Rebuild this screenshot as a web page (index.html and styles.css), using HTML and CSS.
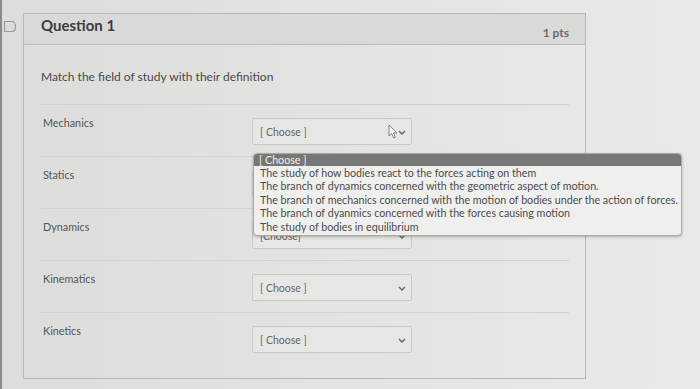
FILE: index.html
```html
<!DOCTYPE html>
<html>
<head>
<meta charset="utf-8">
<link rel="stylesheet" href="styles.css">
</head>
<body>
<div class="page">
  <div class="flag">
    <svg width="14" height="13" viewBox="0 0 14 13"><path d="M1.5 1.5 H9 Q12.5 1.5 12.5 6.5 Q12.5 11.5 9 11.5 H1.5 Z" fill="none" stroke="#9a9a98" stroke-width="1.2"/></svg>
  </div>
  <div class="card">
    <div class="card-head">
      <div class="title">Question 1</div>
      <div class="pts">1 pts</div>
    </div>
    <div class="card-body">
      <p class="prompt">Match the field of study with their definition</p>
      <div class="rows">
        <div class="row">
          <div class="label">Mechanics</div>
          <div class="select-wrap">
            <div class="select">
              <span>[ Choose ]</span>
              <svg class="chev" width="8" height="5" viewBox="0 0 8 5"><path d="M1 1 L4 4 L7 1" fill="none" stroke="#666" stroke-width="1.4"/></svg>
            </div>
            <svg class="cursor" width="11" height="15" viewBox="0 0 11 15"><path d="M1 1 L1 12 L3.6 9.6 L5.6 14 L7.4 13.2 L5.4 8.9 L9 8.9 Z" fill="#f2f2f0" stroke="#777" stroke-width="0.9" stroke-linejoin="round"/></svg>
            <div class="dropdown">
              <div class="opt active">[ Choose ]</div>
              <div class="opt">The study of how bodies react to the forces acting on them</div>
              <div class="opt">The branch of dynamics concerned with the geometric aspect of motion.</div>
              <div class="opt">The branch of mechanics concerned with the motion of bodies under the action of forces.</div>
              <div class="opt">The branch of dyanmics concerned with the forces causing motion</div>
              <div class="opt">The study of bodies in equilibrium</div>
            </div>
          </div>
        </div>
        <div class="row">
          <div class="label">Statics</div>
          <div class="select-wrap">
            <div class="select">
              <span>[ Choose ]</span>
              <svg class="chev" width="8" height="5" viewBox="0 0 8 5"><path d="M1 1 L4 4 L7 1" fill="none" stroke="#666" stroke-width="1.4"/></svg>
            </div>
          </div>
        </div>
        <div class="row">
          <div class="label">Dynamics</div>
          <div class="select-wrap">
            <div class="select">
              <span>[Choose]</span>
              <svg class="chev" width="8" height="5" viewBox="0 0 8 5"><path d="M1 1 L4 4 L7 1" fill="none" stroke="#666" stroke-width="1.4"/></svg>
            </div>
          </div>
        </div>
        <div class="row">
          <div class="label">Kinematics</div>
          <div class="select-wrap">
            <div class="select">
              <span>[ Choose ]</span>
              <svg class="chev" width="8" height="5" viewBox="0 0 8 5"><path d="M1 1 L4 4 L7 1" fill="none" stroke="#666" stroke-width="1.4"/></svg>
            </div>
          </div>
        </div>
        <div class="row last">
          <div class="label">Kinetics</div>
          <div class="select-wrap">
            <div class="select">
              <span>[ Choose ]</span>
              <svg class="chev" width="8" height="5" viewBox="0 0 8 5"><path d="M1 1 L4 4 L7 1" fill="none" stroke="#666" stroke-width="1.4"/></svg>
            </div>
          </div>
        </div>
      </div>
    </div>
  </div>
</div>
</body>
</html>
```

FILE: styles.css
```css
html, body {
  margin: 0;
  padding: 0;
}
body {
  width: 700px;
  height: 389px;
  overflow: hidden;
  font-family: Lato, "Open Sans", sans-serif;
  background: linear-gradient(90deg, #dcdcda 0%, #e2e2e0 40%, #e9e9e7 100%);
  border-left: 2px solid #8a8a88;
  box-sizing: border-box;
}
.page {
  display: flex;
  padding: 13px 0 0 0;
}
.flag {
  width: 20px;
  padding: 4px 0 0 1px;
  flex: none;
}
.card {
  width: 563px;
  height: 366px;
  border: 1px solid #b8b8b6;
  box-sizing: border-box;
  display: flex;
  flex-direction: column;
}
.card-head {
  height: 31px;
  background: #d9d9d7;
  border-bottom: 1px solid #bcbcba;
  box-sizing: border-box;
  display: flex;
  justify-content: space-between;
  align-items: flex-start;
  padding: 2px 16px 0 17px;
}
.title {
  font-size: 15px;
  font-weight: bold;
  color: #3c3c3c;
}
.pts {
  font-size: 12px;
  font-weight: bold;
  color: #6a6a6a;
  margin-top: 9px;
}
.card-body {
  padding: 0 16px 0 17px;
}
.prompt {
  margin: 0;
  font-size: 12px;
  color: #4a4a4a;
  padding: 24px 0 20px 0;
  border-bottom: 1px solid #cfcfcd;
}
.rows {
  display: flex;
  flex-direction: column;
}
.row {
  height: 52px;
  box-sizing: border-box;
  border-bottom: 1px solid #d2d2d0;
  display: flex;
  padding-top: 12px;
}
.row.last {
  border-bottom: none;
}
.label {
  width: 211px;
  flex: none;
  font-size: 10.8px;
  color: #555;
  padding: 0 0 0 2px;
  margin-top: -1px;
  box-sizing: border-box;
}
.select-wrap {
  position: relative;
  width: 160px;
  margin-top: 1px;
}
.select {
  height: 27px;
  border: 1px solid #c9c9c7;
  background: #e6e6e4;
  border-radius: 2px;
  box-sizing: border-box;
  display: flex;
  align-items: center;
  justify-content: space-between;
  padding: 0 5px 0 7px;
  font-size: 10.5px;
  color: #666;
}
.chev {
  display: block;
  margin-top: 2px;
}
.cursor {
  position: absolute;
  left: 136px;
  top: 6px;
}
.dropdown {
  position: absolute;
  left: 1px;
  top: 35px;
  width: 429px;
  height: 83px;
  background: #efefed;
  border: 1px solid #a9a9a7;
  border-radius: 4px;
  box-shadow: 0 1px 3px rgba(0,0,0,0.25);
  overflow: hidden;
  z-index: 5;
  box-sizing: border-box;
}
.opt {
  font-size: 10.7px;
  line-height: 13.4px;
  height: 13.4px;
  color: #4c4c4c;
  padding-left: 6px;
  white-space: nowrap;
}
.opt.active {
  background: #777775;
  color: #efefef;
  height: 12px;
  line-height: 12px;
  padding-left: 5px;
}
```
